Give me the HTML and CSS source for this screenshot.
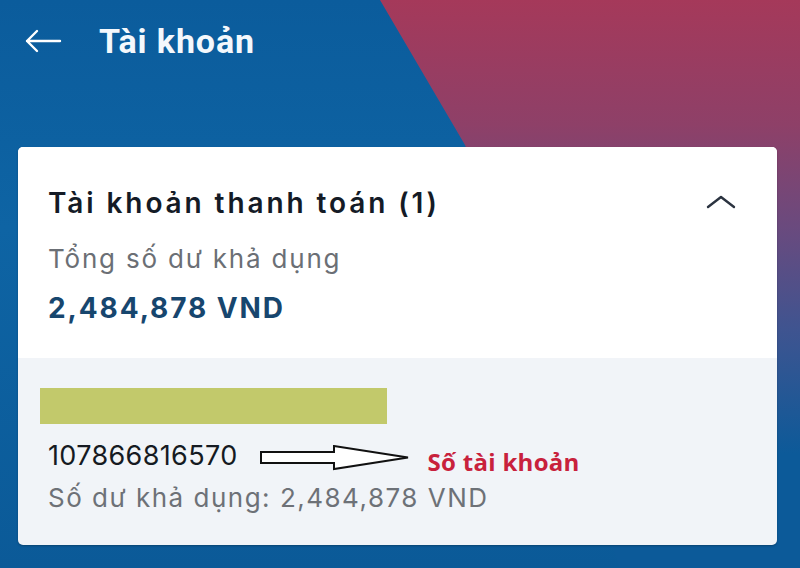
FILE: index.html
```html
<!DOCTYPE html>
<html lang="vi">
<head>
<meta charset="utf-8">
<title>Tài khoản</title>
<link rel="stylesheet" href="styles.css">
</head>
<body>
<div class="screen">
  <header class="topbar">
    <svg class="back" width="38" height="24" viewBox="0 0 38 24" aria-hidden="true">
      <path d="M36 12H3M13 2L3 12l10 10" fill="none" stroke="#fff" stroke-width="2.4" stroke-linecap="round" stroke-linejoin="round"/>
    </svg>
    <h1 class="page-title">Tài khoản</h1>
  </header>

  <section class="card">
    <div class="card-top">
      <div class="card-head">
        <h2 class="card-title">Tài khoản thanh toán (1)</h2>
        <svg class="chevron" width="30" height="14" viewBox="0 0 30 14" aria-hidden="true">
          <path d="M2 12L15 2l13 10" fill="none" stroke="#2b3340" stroke-width="2.4" stroke-linecap="round" stroke-linejoin="round"/>
        </svg>
      </div>
      <p class="label">Tổng số dư khả dụng</p>
      <p class="amount">2,484,878 VND</p>
    </div>
    <div class="card-bottom">
      <div class="mask"></div>
      <div class="acc-row">
        <span class="acc-no">107866816570</span>
        <svg class="pointer" width="152" height="26" viewBox="0 0 152 26" aria-hidden="true">
          <path d="M2 7H75V1L149 12.5L75 24V18H2Z" fill="#fff" stroke="#111" stroke-width="2" stroke-linejoin="miter"/>
        </svg>
        <span class="note">Số tài khoản</span>
      </div>
      <p class="balance">Số dư khả dụng: 2,484,878 VND</p>
    </div>
  </section>
</div>
</body>
</html>
```

FILE: styles.css
```css
* { box-sizing: border-box; }
html, body { margin: 0; padding: 0; }
body {
  width: 800px;
  height: 568px;
  overflow: hidden;
  font-family: "Inter", "Noto Sans", sans-serif;
}
.screen {
  position: relative;
  width: 800px;
  height: 568px;
  background: linear-gradient(180deg, #0b5c9c 0%, #0e64a4 40%, #0b5a98 100%);
  padding-top: 1px;
}
.screen::before {
  content: "";
  position: absolute;
  inset: 0;
  background: linear-gradient(180deg, #a5395a 0%, #8e4068 22%, #6a4a7e 40%, #3f5490 58%, #0c5a99 80%);
  clip-path: polygon(380px 0, 800px 0, 800px 568px, 620px 568px, 465px 145px);
}
.topbar {
  position: relative;
  display: flex;
  align-items: center;
  height: 80px;
  padding-left: 24px;
  margin-bottom: 66px;
}
.back { margin-right: 37px; }
.page-title {
  margin: 0;
  font-family: "Roboto", sans-serif;
  font-weight: 700;
  font-size: 34px;
  color: #f4f8fc;
  letter-spacing: 0.9px;
}
.card {
  position: relative;
  margin: 0 23px 0 18px;
  height: 398px;
  border-radius: 5px;
  overflow: hidden;
  background: #f1f4f8;
  box-shadow: 0 1px 2px rgba(0,0,0,0.25);
}
.card-top {
  background: #fff;
  height: 211px;
  padding: 38px 40px 0 30px;
}
.card-head {
  display: flex;
  align-items: center;
  justify-content: space-between;
}
.card-title {
  margin: 0;
  font-size: 28px;
  line-height: 36px;
  font-weight: 600;
  color: #141b26;
  letter-spacing: 2.9px;
}
.chevron { margin-top: -2px; margin-right: 1px; }
.label {
  margin: 22px 0 0;
  font-size: 26px;
  line-height: 32px;
  font-weight: 400;
  color: #6b6f75;
  letter-spacing: 1.8px;
}
.amount {
  margin: 17px 0 0;
  font-size: 28px;
  line-height: 32px;
  font-weight: 700;
  color: #17466e;
  letter-spacing: 1.9px;
}
.card-bottom {
  padding: 30px 30px 0 22px;
}
.mask {
  width: 347px;
  height: 36px;
  background: #c2c96b;
}
.acc-row {
  display: flex;
  align-items: center;
  height: 32px;
  margin-top: 16px;
  padding-left: 8px;
}
.acc-no {
  font-size: 27px;
  line-height: 32px;
  color: #151a22;
  letter-spacing: 0.35px;
}
.pointer { margin-left: 21px; margin-top: 4px; }
.note {
  margin-left: 17px;
  margin-top: 12px;
  font-family: "Open Sans", sans-serif;
  font-weight: 700;
  font-size: 24px;
  line-height: 32px;
  color: #c8213c;
  letter-spacing: 0.3px;
}
.balance {
  margin: 10px 0 0 8px;
  font-size: 26px;
  line-height: 32px;
  color: #6d7177;
  letter-spacing: 1.5px;
}
```
